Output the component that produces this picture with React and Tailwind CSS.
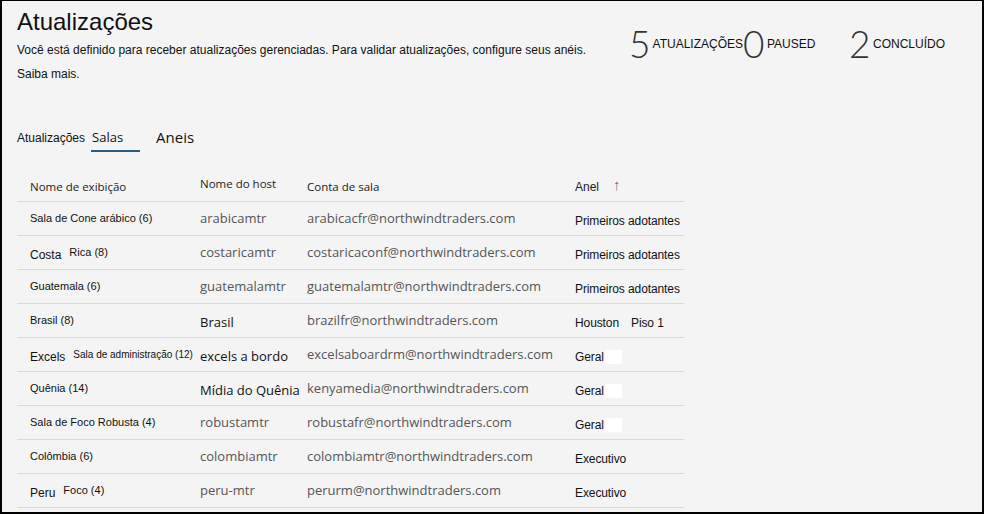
import React from 'react';

const rows = [
  { name: 'Sala de Cone arábico (6)', host: 'arabicamtr', mail: 'arabicacfr@northwindtraders.com', ring: 'Primeiros adotantes' },
  { name: 'Costa', extra: 'Rica (8)', host: 'costaricamtr', mail: 'costaricaconf@northwindtraders.com', ring: 'Primeiros adotantes' },
  { name: 'Guatemala (6)', host: 'guatemalamtr', mail: 'guatemalamtr@northwindtraders.com', ring: 'Primeiros adotantes' },
  { name: 'Brasil (8)', host: 'Brasil', hostDark: true, mail: 'brazilfr@northwindtraders.com', ring: 'Houston', ringExtra: 'Piso 1' },
  { name: 'Excels', extra: 'Sala de administração (12)', small: true, host: 'excels a bordo', hostDark: true, mail: 'excelsaboardrm@northwindtraders.com', ring: 'Geral', blank: true },
  { name: 'Quênia (14)', host: 'Mídia do Quênia', hostDark: true, mail: 'kenyamedia@northwindtraders.com', ring: 'Geral', blank: true },
  { name: 'Sala de Foco Robusta (4)', host: 'robustamtr', mail: 'robustafr@northwindtraders.com', ring: 'Geral', blank: true },
  { name: 'Colômbia (6)', host: 'colombiamtr', mail: 'colombiamtr@northwindtraders.com', ring: 'Executivo' },
  { name: 'Peru', extra: 'Foco (4)', host: 'peru-mtr', mail: 'perurm@northwindtraders.com', ring: 'Executivo' },
];

const arial = "font-['Liberation_Sans',Arial,sans-serif]";
const segoe = "font-['Open_Sans','Noto_Sans',sans-serif]";

function Stat({ value, label, width }) {
  return (
    <div className={`flex items-center ${width}`}>
      <span className="w-[24px] font-['Lato',sans-serif] font-light text-[37px] leading-none text-[#333]">{value}</span>
      <span className={`${arial} text-[12px] text-[#111]`}>{label}</span>
    </div>
  );
}

export default function App() {
  return (
    <div className="w-[984px] h-[514px] bg-[#f4f4f4] border-t border-r-2 border-b-2 border-l-2 border-black overflow-hidden">
      <div className="flex">
        <div className="pl-[15px] pt-[6px] w-[610px]">
          <h1 className={`${arial} text-[24px] leading-[30px] text-[#111]`}>Atualizações</h1>
          <p className={`${arial} text-[12px] leading-[16px] text-[#111] mt-[5px]`}>
            Você está definido para receber atualizações gerenciadas. Para validar atualizações, configure seus anéis.
          </p>
          <p className={`${arial} text-[12px] leading-[16px] text-[#111] mt-[8px]`}>Saiba mais.</p>
        </div>
        <div className="flex items-start pt-[24px] pl-[17px]">
          <Stat value="5" label="ATUALIZAÇÕES" width="w-[114px]" />
          <Stat value="0" label="PAUSED" width="w-[106px]" />
          <Stat value="2" label="CONCLUÍDO" width="w-[110px]" />
        </div>
      </div>

      <div className="flex items-end pl-[15px] mt-[48px] h-[22px]">
        <span className={`${arial} text-[12px] text-[#111] pb-[5px]`}>Atualizações</span>
        <span className={`${segoe} text-[13px] text-[#111] ml-[6px] w-[49px] pl-[1px] pb-[3px] border-b-2 border-[#2b5d7f]`}>Salas</span>
        <span className={`${segoe} text-[15px] text-[#111] ml-[16px] pb-[4px]`}>Aneis</span>
      </div>

      <div className="ml-[15px] w-[667px] mt-[16px]">
        <div className={`grid grid-cols-[183px_107px_268px_109px] h-[34px] items-center border-b border-[#dadada] ${segoe} text-[11.5px] text-[#222]`}>
          <span className="pl-[13px] pt-[4px]">Nome de exibição</span>
          <span className="-mt-[2px]">Nome do host</span>
          <span className="pt-[4px]">Conta de sala</span>
          <span className="pt-[4px] flex items-center">
            <span className={`${arial} text-[12px]`}>Anel</span>
            <span className="ml-[14px] -mt-[4px] text-[#777] text-[15px]">↑</span>
          </span>
        </div>
        {rows.map((r) => (
          <div key={r.mail} className="grid grid-cols-[183px_107px_268px_109px] h-[34px] items-center border-b border-[#dadada]">
            <div className={`${arial} text-[11px] text-[#111] pl-[13px] flex items-center`}>
              <span className={r.extra ? 'mt-[4px] text-[12px]' : ''}>{r.name}</span>
              {r.extra && (
                <span className={`ml-[8px] -mt-[1px] ${r.small ? 'text-[10px]' : 'text-[11px]'}`}>{r.extra}</span>
              )}
            </div>
            <div className={`${segoe} text-[13px] ${r.hostDark ? 'text-[#111] mt-[4px]' : 'text-[#555]'}`}>{r.host}</div>
            <div className={`${segoe} text-[13px] text-[#555]`}>{r.mail}</div>
            <div className={`${arial} text-[12px] tracking-[-0.1px] text-[#111] mt-[4px] flex items-center`}>
              <span>{r.ring}</span>
              {r.ringExtra && <span className="ml-[12px]">{r.ringExtra}</span>}
              {r.blank && <span className="ml-[1px] w-[17px] h-[14px] bg-white" />}
            </div>
          </div>
        ))}
      </div>
    </div>
  );
}
